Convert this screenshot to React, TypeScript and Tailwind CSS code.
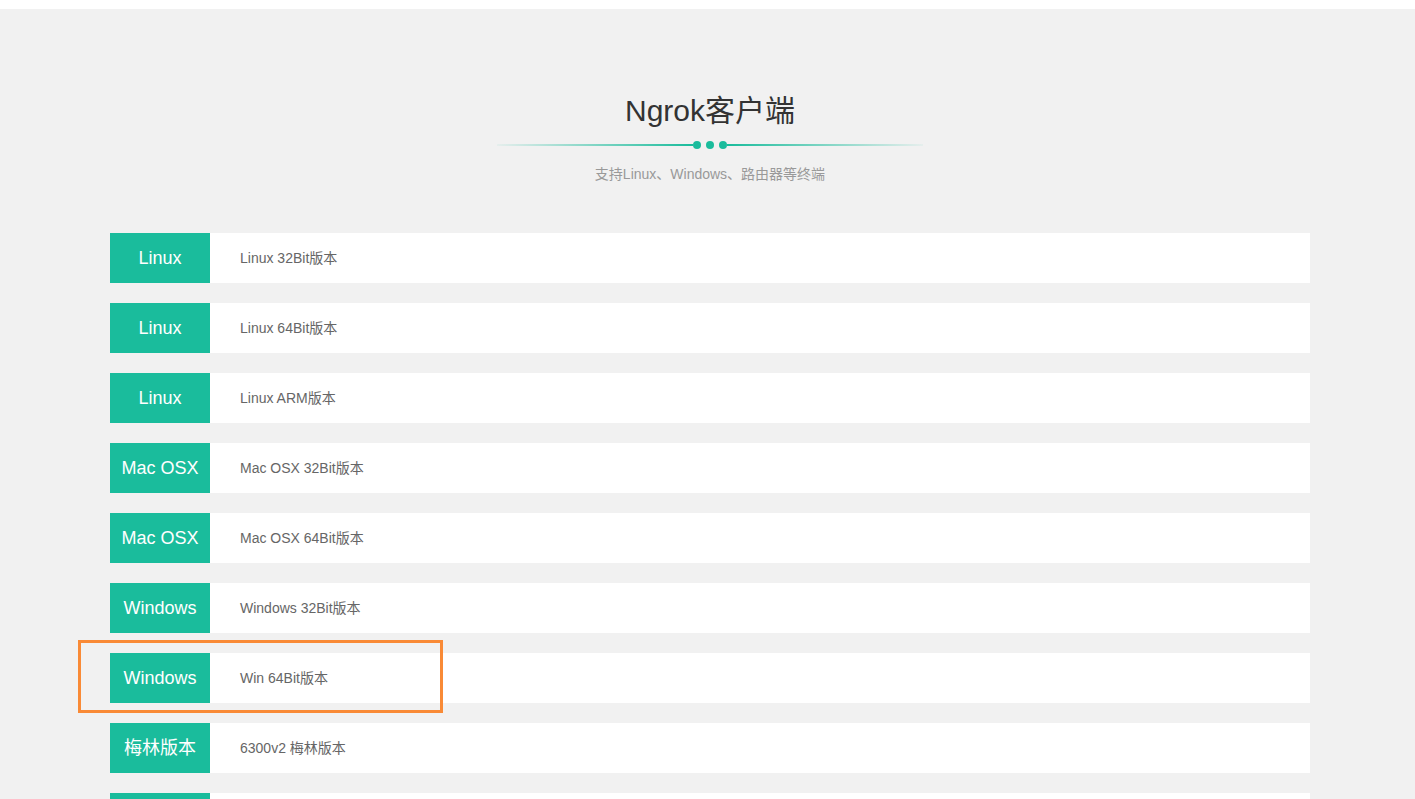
const ROWS = [
  { tag: "Linux", name: "Linux 32Bit版本" },
  { tag: "Linux", name: "Linux 64Bit版本" },
  { tag: "Linux", name: "Linux ARM版本" },
  { tag: "Mac OSX", name: "Mac OSX 32Bit版本" },
  { tag: "Mac OSX", name: "Mac OSX 64Bit版本" },
  { tag: "Windows", name: "Windows 32Bit版本" },
  { tag: "Windows", name: "Win 64Bit版本", marked: true },
  { tag: "梅林版本", name: "6300v2 梅林版本" },
  { tag: "路由器", name: "路由器版本" },
];

export default function App() {
  return (
    <div className="min-h-screen bg-white font-['Liberation_Sans','Noto_Sans_CJK_SC',sans-serif]">
      <div className="h-[9px] bg-white" />

      <section className="bg-[#f1f1f1] pb-10 pt-[82px]">
        <div className="ml-[110px] w-[1200px]">
          {/* Heading */}
          <div className="flex flex-col items-center">
            <h2 className="text-[30px] leading-[40px] text-[#333]">Ngrok客户端</h2>

            <div className="mt-[10px] flex w-[426px] items-center">
              <div className="h-[2px] flex-1 bg-[linear-gradient(to_right,rgba(26,188,156,0.05),#1abc9c)]" />
              <div className="flex gap-[5px]">
                <span className="h-2 w-2 rounded-full bg-[#1abc9c]" />
                <span className="h-2 w-2 rounded-full bg-[#1abc9c]" />
                <span className="h-2 w-2 rounded-full bg-[#1abc9c]" />
              </div>
              <div className="h-[2px] flex-1 bg-[linear-gradient(to_left,rgba(26,188,156,0.05),#1abc9c)]" />
            </div>

            <p className="mt-[15px] text-sm text-[#999]">支持Linux、Windows、路由器等终端</p>
          </div>

          {/* Download list */}
          <ul className="mt-[49px] flex flex-col gap-5">
            {ROWS.map((row) => (
              <li key={row.name} className="relative flex h-[50px] bg-white">
                <span className="flex w-[100px] items-center justify-center bg-[#1abc9c] text-lg text-white">
                  {row.tag}
                </span>
                <span className="flex items-center pl-[30px] text-sm text-[#666]">{row.name}</span>

                {row.marked && (
                  <span className="pointer-events-none absolute -left-[32px] -top-[13px] h-[73px] w-[365px] border-[3px] border-[#f98a36]" />
                )}
              </li>
            ))}
          </ul>
        </div>
      </section>
    </div>
  );
}
